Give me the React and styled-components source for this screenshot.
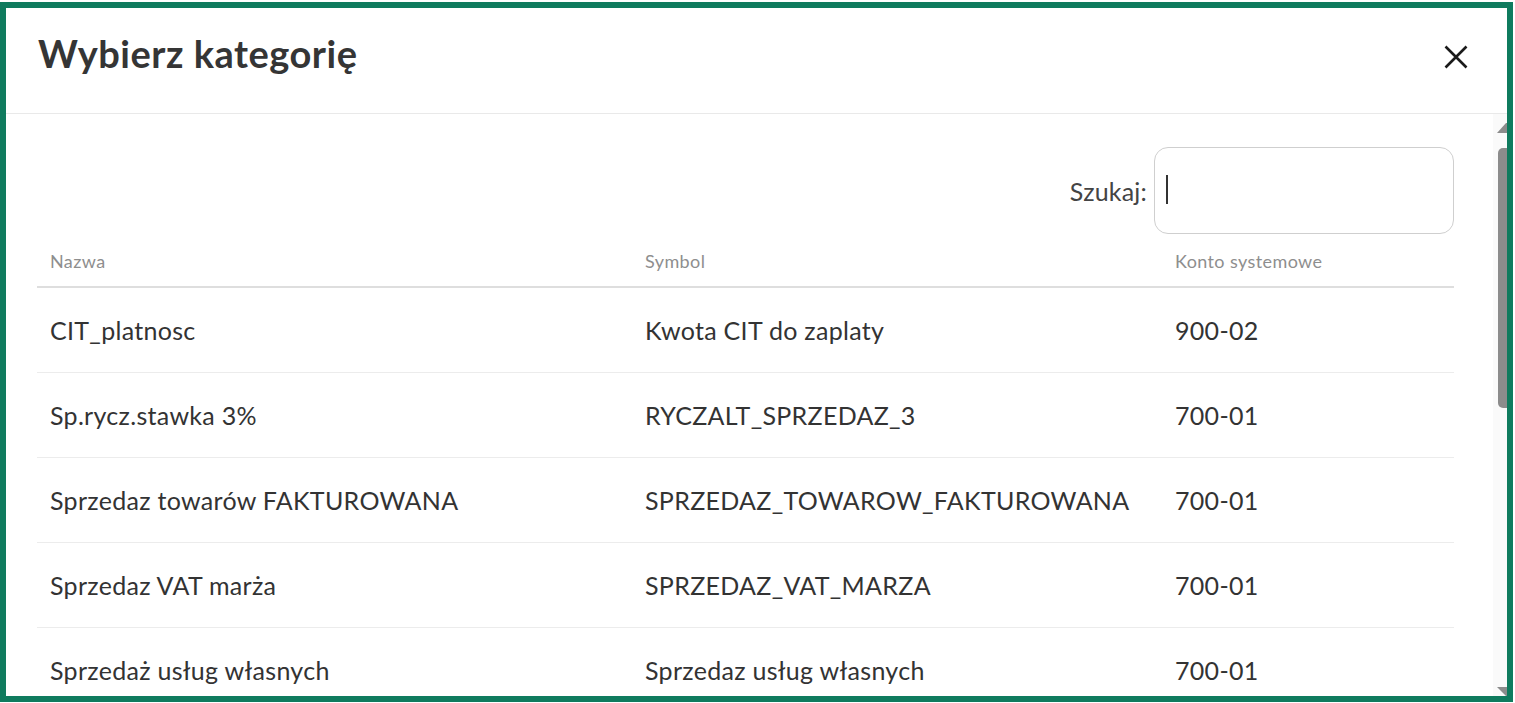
import React from 'react'
import styled, { createGlobalStyle } from 'styled-components'

const GlobalStyle = createGlobalStyle`
  html, body {
    margin: 0;
    padding: 0;
    background: #ffffff;
    font-family: Lato, "Open Sans", sans-serif;
    color: #333333;
  }
  * { box-sizing: border-box; }
`

const Frame = styled.div`
  margin: 2px 2px 1px 0;
  height: 700px;
  border: 6px solid #0f7b5e;
  background: #fff;
  display: flex;
  flex-direction: column;
  overflow: hidden;
`

const Header = styled.header`
  height: 106px;
  flex-shrink: 0;
  display: flex;
  align-items: center;
  justify-content: space-between;
  padding: 0 39px 8px 32px;
  border-bottom: 1px solid #e9e9e9;
`

const Title = styled.h1`
  margin: 0 0 8px;
  font-size: 38px;
  font-weight: 700;
  color: #353535;
  letter-spacing: 0.5px;
`

const CloseButton = styled.button`
  border: 0;
  background: none;
  padding: 0;
  width: 24px;
  height: 24px;
  display: flex;
  cursor: pointer;
  color: #1a1a1a;
`

const BodyWrap = styled.div`
  flex: 1;
  min-height: 0;
  display: flex;
`

const Content = styled.div`
  flex: 1;
  overflow: hidden;
  padding: 33px 39px 0 31px;
`

const ScrollTrack = styled.div`
  width: 14px;
  flex-shrink: 0;
  background: #fafafa;
  display: flex;
  flex-direction: column;
  align-items: flex-end;
  padding-top: 8px;
`

const Arrow = styled.svg`
  display: block;
  width: 10px;
  height: ${p => p.$h || 11}px;
  margin-top: ${p => p.$push ? 'auto' : '0'};
`

const Thumb = styled.div`
  width: 9px;
  height: 260px;
  margin-top: 15px;
  background: #8c8c8c;
  border-radius: 5px 0 0 5px;
`

const SearchRow = styled.div`
  display: flex;
  justify-content: flex-end;
  align-items: center;
  gap: 7px;
  margin-bottom: 8px;
`

const SearchLabel = styled.label`
  font-size: 25px;
  color: #444;
  letter-spacing: 0.2px;
`

const SearchBox = styled.div`
  position: relative;
  width: 300px;
  height: 87px;
`

const SearchInput = styled.input`
  width: 100%;
  height: 100%;
  border: 1px solid #cfcfcf;
  border-radius: 14px;
  padding: 0 12px;
  font-family: Lato, sans-serif;
  font-size: 24px;
  outline: none;
  background: #fff;
`

const Caret = styled.span`
  position: absolute;
  left: 12px;
  top: 28px;
  width: 1.5px;
  height: 29px;
  background: #333;
`

const Table = styled.table`
  width: 100%;
  border-collapse: collapse;
  table-layout: fixed;
`

const HeadCell = styled.th`
  text-align: left;
  font-weight: 400;
  font-size: 18px;
  letter-spacing: 0.4px;
  color: #8e8e8e;
  height: 45px;
  padding: 0 13px 6px;
  border-bottom: 2px solid #dedede;
  width: ${p => p.$w};
`

const Row = styled.tr`
  height: 85px;
  border-bottom: 1px solid #ececec;
`

const Cell = styled.td`
  font-size: 25px;
  letter-spacing: 0.3px;
  color: #333;
  padding: 0 13px;
  white-space: nowrap;
`

const rows = [
  ['CIT_platnosc', 'Kwota CIT do zaplaty', '900-02'],
  ['Sp.rycz.stawka 3%', 'RYCZALT_SPRZEDAZ_3', '700-01'],
  ['Sprzedaz towarów FAKTUROWANA', 'SPRZEDAZ_TOWAROW_FAKTUROWANA', '700-01'],
  ['Sprzedaz VAT marża', 'SPRZEDAZ_VAT_MARZA', '700-01'],
  ['Sprzedaż usług własnych', 'Sprzedaz usług własnych', '700-01'],
]

const CloseIcon = () => (
  <svg width="24" height="24" viewBox="0 0 24 24" fill="none">
    <path d="M1.5 1.5L22.5 22.5M22.5 1.5L1.5 22.5" stroke="currentColor" strokeWidth="2.6" />
  </svg>
)

const App = () => {
  return (
    <>
      <GlobalStyle />
      <Frame>
        <Header>
          <Title>Wybierz kategorię</Title>
          <CloseButton aria-label="Zamknij">
            <CloseIcon />
          </CloseButton>
        </Header>
        <BodyWrap>
          <Content>
            <SearchRow>
              <SearchLabel htmlFor="szukaj">Szukaj:</SearchLabel>
              <SearchBox>
                <SearchInput id="szukaj" type="text" />
                <Caret />
              </SearchBox>
            </SearchRow>
            <Table>
              <thead>
                <tr>
                  <HeadCell $w="595px">Nazwa</HeadCell>
                  <HeadCell $w="530px">Symbol</HeadCell>
                  <HeadCell>Konto systemowe</HeadCell>
                </tr>
              </thead>
              <tbody>
                {rows.map((r, i) => (
                  <Row key={i}>
                    <Cell>{r[0]}</Cell>
                    <Cell>{r[1]}</Cell>
                    <Cell>{r[2]}</Cell>
                  </Row>
                ))}
              </tbody>
            </Table>
          </Content>
          <ScrollTrack aria-hidden="true">
            <Arrow viewBox="0 0 10 11">
              <path d="M0 11 L9 1 L10 1 L10 11 Z" fill="#8c8c8c" />
            </Arrow>
            <Thumb />
            <Arrow viewBox="0 0 10 9" $h={9} $push>
              <path d="M0 0 L10 0 L10 9 L9 9 Z" fill="#8c8c8c" />
            </Arrow>
          </ScrollTrack>
        </BodyWrap>
      </Frame>
    </>
  )
}

export default App
